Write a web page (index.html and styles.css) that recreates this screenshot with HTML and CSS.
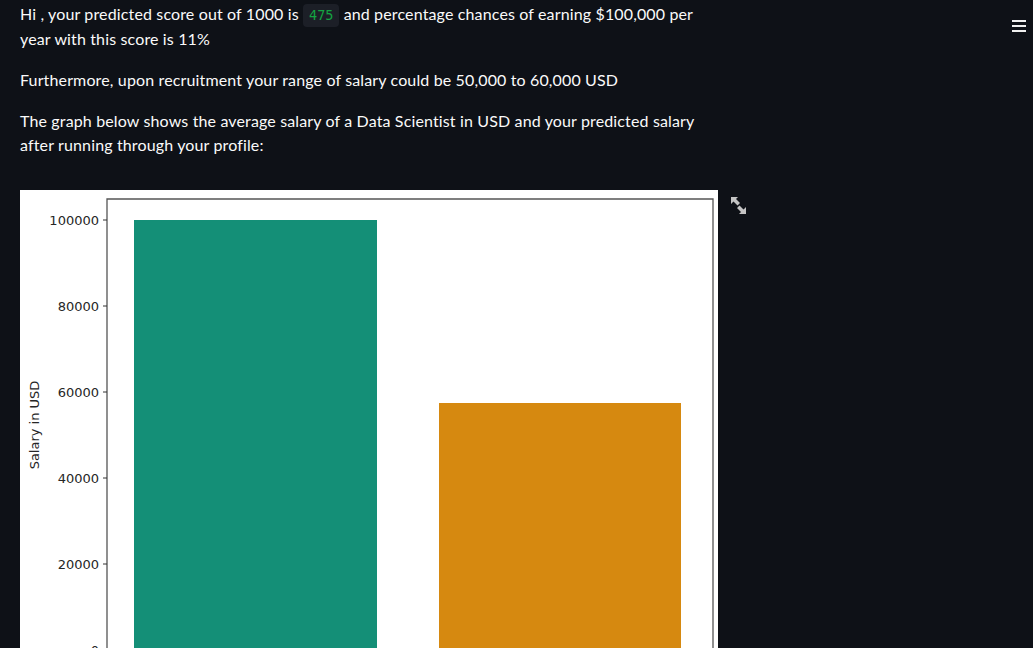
FILE: index.html
```html
<!DOCTYPE html>
<html>
<head>
<meta charset="utf-8">
<link rel="stylesheet" href="styles.css">
</head>
<body>
<div class="menu" aria-label="menu">
  <span></span><span></span><span></span>
</div>
<main class="content">
  <p>Hi , your predicted score out of 1000 is <code>475</code> and percentage chances of earning $100,000 per year with this score is 11%</p>
  <p>Furthermore, upon recruitment your range of salary could be 50,000 to 60,000 USD</p>
  <p>The graph below shows the average salary of a Data Scientist in USD and your predicted salary after running through your profile:</p>
  <div class="figure">
    <svg class="chart" width="698" height="470" viewBox="0 0 698 470">
      <rect x="0" y="0" width="698" height="470" fill="#fff"/>
      <rect x="114" y="30" width="243" height="440" fill="#148f77"/>
      <rect x="419" y="213" width="242" height="257" fill="#d68910"/>
      <path d="M87 470 V9 H693 V470" fill="none" stroke="#555" stroke-width="1.3"/>
      <g stroke="#333" stroke-width="1">
        <line x1="83" y1="30" x2="87" y2="30"/>
        <line x1="83" y1="116" x2="87" y2="116"/>
        <line x1="83" y1="202" x2="87" y2="202"/>
        <line x1="83" y1="288" x2="87" y2="288"/>
        <line x1="83" y1="374" x2="87" y2="374"/>
        <line x1="83" y1="460" x2="87" y2="460"/>
      </g>
      <g class="ticks" text-anchor="end">
        <text x="79" y="35">100000</text>
        <text x="79" y="121">80000</text>
        <text x="79" y="207">60000</text>
        <text x="79" y="293">40000</text>
        <text x="79" y="379">20000</text>
        <text x="79" y="465">0</text>
      </g>
      <text class="ylabel" transform="translate(19 235) rotate(-90)" text-anchor="middle">Salary in USD</text>
    </svg>
    <button class="expand" aria-label="fullscreen">
      <svg width="16" height="18" viewBox="0 0 16 18">
        <path d="M0 0 H7 L5 2 L9 6 L6.5 8.5 L2.5 4.5 L0 7 Z" fill="#c4c4c4"/>
        <path d="M15 17 H8 L10 15 L6 11 L8.5 8.5 L12.5 12.5 L15 10 Z" fill="#c4c4c4"/>
      </svg>
    </button>
  </div>
</main>
</body>
</html>
```

FILE: styles.css
```css
html, body {
  margin: 0;
  padding: 0;
  background: #0e1117;
  height: 100%;
  overflow: hidden;
}
body {
  font-family: "Lato", "Source Sans Pro", sans-serif;
  color: #fafafa;
  font-size: 16px;
  line-height: 24px;
  letter-spacing: 0.14px;
}
.content {
  width: 698px;
  padding: 2px 0 0 20px;
}
p {
  margin: 0 0 17px 0;
}
code {
  display: inline-block;
  font-family: "DejaVu Sans Mono", "Liberation Mono", monospace;
  font-size: 13.5px;
  line-height: 17px;
  letter-spacing: 0;
  color: #14a342;
  background: #1c1f27;
  padding: 3px 6px;
  border-radius: 4px;
  margin: 0;
}
.figure {
  position: relative;
  margin-top: 33px;
  width: 698px;
}
.chart {
  display: block;
}
.ticks {
  font-family: "DejaVu Sans", sans-serif;
  font-size: 13px;
  letter-spacing: 0;
  fill: #262626;
}
.ylabel {
  font-family: "DejaVu Sans", sans-serif;
  font-size: 13px;
  letter-spacing: 0;
  fill: #262626;
}
.expand {
  position: absolute;
  left: 711px;
  top: 7px;
  background: none;
  border: 0;
  padding: 0;
  width: 16px;
  height: 18px;
}
.expand svg {
  display: block;
}
.menu {
  position: absolute;
  left: 1012px;
  top: 20px;
  width: 14px;
  display: flex;
  flex-direction: column;
  gap: 3px;
}
.menu span {
  display: block;
  height: 2px;
  background: #f0f0f0;
}
```
